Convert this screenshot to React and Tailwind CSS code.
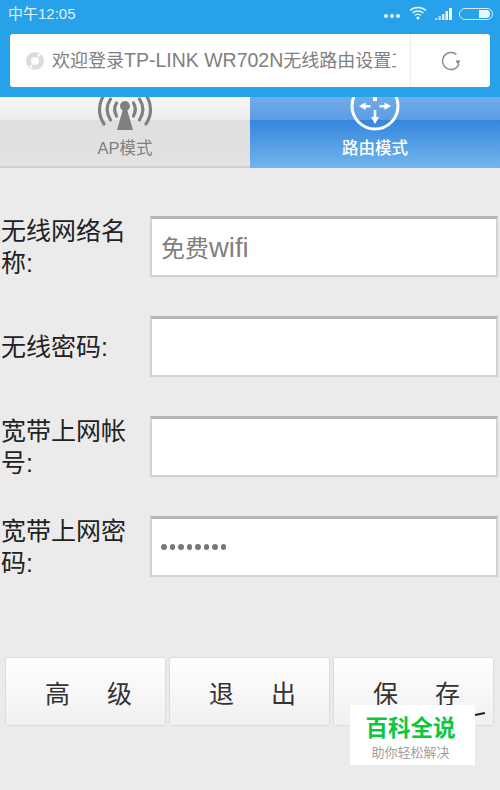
const font = "font-['Liberation_Sans','Noto_Sans_CJK_SC',sans-serif]";

function ApIcon() {
  return (
    <svg width="60" height="46" viewBox="0 0 60 46" fill="none" className="absolute left-[95px] top-[-5px]">
      <g stroke="#808080" strokeWidth="3.200" strokeLinecap="round">
        <path d="M9 3c-6 9-6 20 0 29" />
        <path d="M15.500 7c-4.500 7-4.500 14 0 21" />
        <path d="M21.500 11c-2.500 4.500-2.500 8.500 0 13" />
        <path d="M51 3c6 9 6 20 0 29" />
        <path d="M44.500 7c4.500 7 4.500 14 0 21" />
        <path d="M38.500 11c2.500 4.500 2.500 8.500 0 13" />
      </g>
      <circle cx="30" cy="14" r="5" fill="#808080" />
      <path d="M28 17h4l6 21H22z" fill="#808080" />
    </svg>
  );
}

function RouterIcon() {
  return (
    <svg width="52" height="46" viewBox="0 0 52 46" fill="none" className="absolute left-[99px] top-[-7px]">
      <circle cx="26" cy="16" r="23" stroke="#fff" strokeWidth="3" />
      <rect x="24" y="7" width="4" height="4" fill="#fff" />
      <path d="M10 16l6.500-3.500V15h5v2.500h-5V20z" fill="#fff" />
      <path d="M42 16l-6.500-3.500V15h-5v2.500h5V20z" fill="#fff" />
      <path d="M26 34l-4-7h2.700v-7h2.600v7H30z" fill="#fff" />
    </svg>
  );
}

function RefreshIcon() {
  return (
    <svg width="20" height="20" viewBox="0 0 20 20" fill="none">
      <path d="M15.500 3.500A8.500 8.500 0 1 0 18 13" stroke="#8a8a8a" strokeWidth="1.500" />
      <path d="M14.500 9.500h5l-2.500 4z" fill="#808080" />
    </svg>
  );
}

function PageIcon() {
  return (
    <svg width="18" height="18" viewBox="0 0 18 18" fill="none" className="shrink-0">
      <circle cx="9" cy="9" r="6.500" stroke="#dcdcdc" strokeWidth="5" />
      <path d="M12 1.500l2.500 1.500-2.500 3zM6 16.500L3.500 15 6 12z" fill="#fff" />
    </svg>
  );
}

function StatusIcons() {
  return (
    <div className="flex items-center -mr-[3px]">
      <div className="flex gap-[2px] mr-[9px] mt-[4px]">
        <span className="w-[4px] h-[4px] rounded-full bg-white/90" />
        <span className="w-[4px] h-[4px] rounded-full bg-white/90" />
        <span className="w-[4px] h-[4px] rounded-full bg-white/90" />
      </div>
      <svg width="18" height="14" viewBox="0 0 18 14" fill="none" className="mr-[8px] mb-[2px]">
        <path d="M1 4.500c4.500-4 11.500-4 16 0" stroke="#fff" strokeWidth="1.300" opacity=".9" />
        <path d="M3.500 7c3-2.700 8-2.700 11 0" stroke="#fff" strokeWidth="1.300" opacity=".9" />
        <path d="M6 9.500c1.700-1.500 4.300-1.500 6 0" stroke="#fff" strokeWidth="1.300" opacity=".9" />
        <circle cx="9" cy="12" r="1.500" fill="#fff" />
      </svg>
      <svg width="18" height="12" viewBox="0 0 18 12" className="mr-[6px]">
        <rect x="0" y="10" width="2.500" height="2" fill="#fff" opacity=".6" />
        <rect x="3.500" y="8" width="2.500" height="4" fill="#fff" opacity=".6" />
        <rect x="7" y="6" width="2.500" height="6" fill="#fff" opacity=".8" />
        <rect x="10.500" y="3" width="2.500" height="9" fill="#fff" opacity=".9" />
        <rect x="14" y="0" width="3" height="12" fill="#fff" />
      </svg>
      <div className="w-[34px] h-[12px] rounded-full border border-white/80 flex justify-end items-center pr-[2px]">
        <span className="w-[11px] h-[8px] rounded-r-full bg-white/90" />
      </div>
    </div>
  );
}

function FormRow({ label, children }) {
  return (
    <div className="flex items-center h-[61px] mb-[39px]">
      <div className="w-[150px] pl-[1px] pr-[20px] pt-[1px] text-[25px] leading-[32px] text-[#222]">{label}</div>
      <div className="w-[348px] h-full bg-white border-2 border-[#d2d2d2] border-t-[3px] border-t-[#b5b5b5] flex items-center pl-[9px] text-[#808080]">
        {children}
      </div>
    </div>
  );
}

function ActionButton({ chars }) {
  return (
    <button className="w-[159px] h-[67px] pl-[6px] pt-[6px] rounded-[2px] bg-gradient-to-b from-white to-[#f0f0f0] shadow-[0_0_2px_#b8b8b8] text-[25px] text-[#333] flex items-center justify-center gap-[37px]">
      {chars.map((c) => (
        <span key={c}>{c}</span>
      ))}
    </button>
  );
}

export default function App() {
  return (
    <div className={`relative w-[500px] h-[790px] overflow-hidden bg-[#ebebeb] ${font}`}>
      <header className="relative z-10 h-[97px] bg-[#27a2ea] px-[10px]">
        <div className="flex items-center justify-between h-[28px]">
          <span className="text-[15px] text-white/85 -ml-[2px]">中午12:05</span>
          <StatusIcons />
        </div>
        <div className="mt-[6px] h-[53px] bg-white rounded-[3px] flex items-center">
          <div className="w-[401px] flex items-center pl-[16px] pr-[14px] border-r border-[#ececec] h-full">
            <PageIcon />
            <span className="ml-[8px] text-[18px] text-[#808080] whitespace-nowrap overflow-hidden">
              欢迎登录<span className="text-[19.500px]">TP-LINK WR702N</span>无线路由设置工具
            </span>
          </div>
          <div className="flex-1 flex justify-center">
            <RefreshIcon />
          </div>
        </div>
      </header>

      <div className="flex h-[71px]">
        <div className="relative w-[250px] overflow-hidden border-b-2 border-[#cfcfcf] bg-[linear-gradient(#f7f7f7,#ececec_33%,#dfdfdf_33%,#e2e2e2)]">
          <ApIcon />
          <div className="absolute inset-x-0 top-[39px] text-center text-[16.500px] text-[#808080]">AP模式</div>
        </div>
        <div className="relative w-[250px] overflow-hidden bg-[linear-gradient(#70ace8,#5d9ce2_33%,#3686dd_33%,#71b5ec)]">
          <RouterIcon />
          <div className="absolute inset-x-0 top-[39px] text-center text-[16.500px] font-medium text-white">路由模式</div>
        </div>
      </div>

      <form className="pt-[48px]">
        <FormRow label="无线网络名称:">
          <span className="pt-[2px] text-[24px]">免费<span className="text-[27.500px]">wifi</span></span>
        </FormRow>
        <FormRow label="无线密码:" />
        <FormRow label="宽带上网帐号:" />
        <FormRow label="宽带上网密码:">
          <div className="flex gap-[3px]">
            {[0, 1, 2, 3, 4, 5, 6, 7].map((i) => (
              <span key={i} className="w-[5.500px] h-[5.500px] rounded-full bg-[#777]" />
            ))}
          </div>
        </FormRow>
      </form>

      <div className="flex gap-[5px] pl-[6px] pt-[42px]">
        <ActionButton chars={["高", "级"]} />
        <ActionButton chars={["退", "出"]} />
        <ActionButton chars={["保", "存"]} />
      </div>

      <div className="absolute left-[350px] top-[705px] w-[125px] h-[60px] bg-white flex flex-col items-center pt-[10px] pr-[4px]">
        <div className="text-[22.500px] leading-[28px] font-bold text-[#0cc73e]">百科全说</div>
        <div className="text-[13px] leading-[18px] mt-[1px] text-[#a0a0a0]">助你轻松解决</div>
      </div>
      <div className="absolute left-[475px] top-[713px] w-[10px] h-[2px] bg-[#222] -rotate-12" />
    </div>
  );
}
